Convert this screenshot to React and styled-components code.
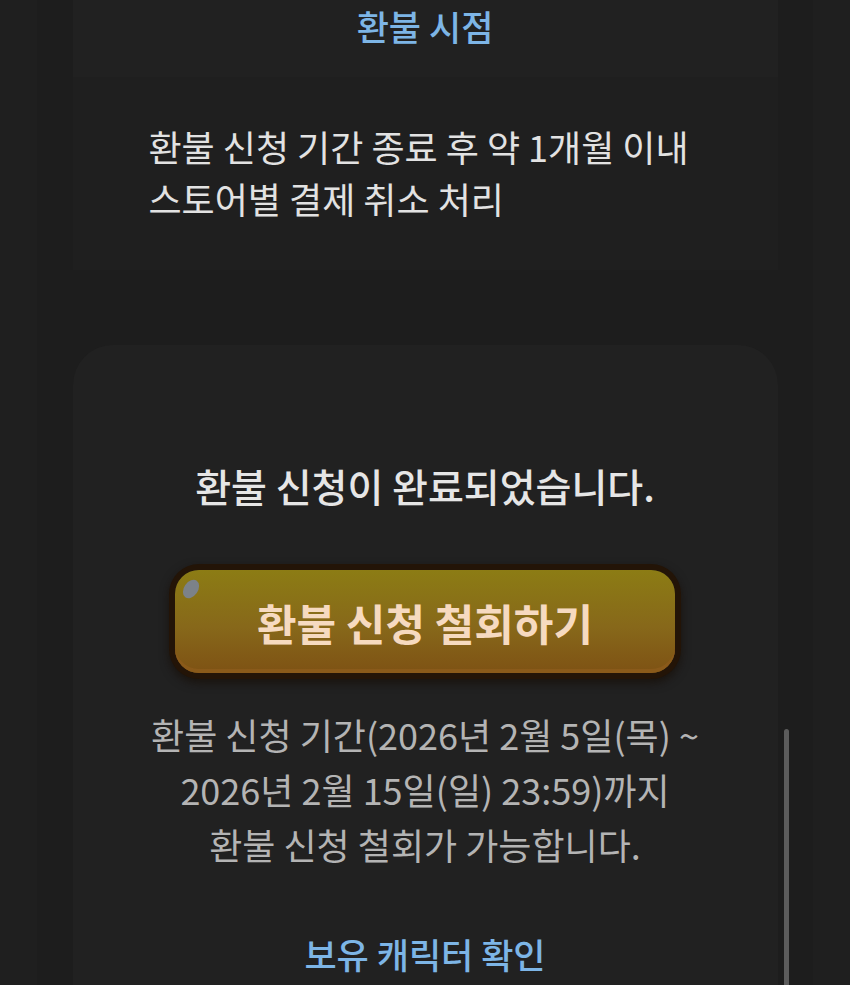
import React from "react";
import styled, { createGlobalStyle } from "styled-components";

const Global = createGlobalStyle`
  html, body { margin: 0; padding: 0; background: #1f1f1f; }
  body { font-family: "Noto Sans CJK KR", "Noto Sans", sans-serif; }
  * { box-sizing: border-box; }
`;

const Page = styled.div`
  position: relative;
  width: 850px;
  height: 985px;
  overflow: hidden;
  background: #1f1f1f;
`;

const Column = styled.div`
  width: 776px;
  margin: 0 auto;
  min-height: 985px;
  background: #1d1d1d;
  display: flex;
  flex-direction: column;
  align-items: center;
`;

const InfoCard = styled.section`
  width: 705px;
  background: #212121;
  display: flex;
  flex-direction: column;
`;

const InfoTitle = styled.h3`
  margin: 0;
  height: 77px;
  padding-top: 2px;
  text-align: center;
  font-size: 35px;
  line-height: 48px;
  font-weight: 500;
  color: #7db5e6;
`;

const InfoBody = styled.div`
  background: #1f1f1f;
  padding: 43px 0 46px 76px;
  font-size: 36px;
  line-height: 52px;
  color: #e2e2e2;
`;

const ResultCard = styled.section`
  width: 705px;
  margin-top: 75px;
  flex: 1;
  background: #212121;
  border-radius: 40px 40px 0 0;
  display: flex;
  flex-direction: column;
  align-items: center;
  padding-top: 114px;
`;

const Message = styled.p`
  margin: 0;
  font-size: 39px;
  line-height: 52px;
  font-weight: 500;
  color: #e6e6e6;
`;

const WithdrawButton = styled.button`
  position: relative;
  margin-top: 59px;
  width: 500px;
  height: 103px;
  border: none;
  border-radius: 24px;
  background: linear-gradient(180deg, #8c7c14 0%, #87681a 55%, #7e5214 100%);
  box-shadow:
    inset 0 -4px 0 #8a5a1a,
    0 0 0 6px #231407,
    0 4px 10px 6px rgba(20, 10, 2, 0.6);
  font-family: inherit;
  font-size: 43px;
  font-weight: 700;
  color: #f6dac0;
  cursor: pointer;
`;

const Gloss = styled.span`
  position: absolute;
  left: 9px;
  top: 9px;
  width: 14px;
  height: 20px;
  border-radius: 50%;
  background: #7c8288;
  transform: rotate(35deg);
`;

const Notice = styled.p`
  margin: 34px 0 0;
  text-align: center;
  font-size: 36px;
  line-height: 55px;
  color: #b4b4b4;
`;

const LinkText = styled.a`
  margin-top: 57px;
  font-size: 35px;
  line-height: 50px;
  font-weight: 500;
  color: #7db5e6;
  text-decoration: none;
`;

const Scrollbar = styled.div`
  position: absolute;
  left: 784px;
  top: 729px;
  width: 5px;
  height: 270px;
  border-radius: 3px;
  background: #5c5c5c;
`;

export default function App() {
  return (
    <>
      <Global />
      <Page>
        <Column>
          <InfoCard>
            <InfoTitle>환불 시점</InfoTitle>
            <InfoBody>
              환불 신청 기간 종료 후 약 1개월 이내
              <br />
              스토어별 결제 취소 처리
            </InfoBody>
          </InfoCard>
          <ResultCard>
            <Message>환불 신청이 완료되었습니다.</Message>
            <WithdrawButton>
              <Gloss />
              환불 신청 철회하기
            </WithdrawButton>
            <Notice>
              환불 신청 기간(2026년 2월 5일(목) ~
              <br />
              2026년 2월 15일(일) 23:59)까지
              <br />
              환불 신청 철회가 가능합니다.
            </Notice>
            <LinkText href="#">보유 캐릭터 확인</LinkText>
          </ResultCard>
        </Column>
        <Scrollbar />
      </Page>
    </>
  );
}
